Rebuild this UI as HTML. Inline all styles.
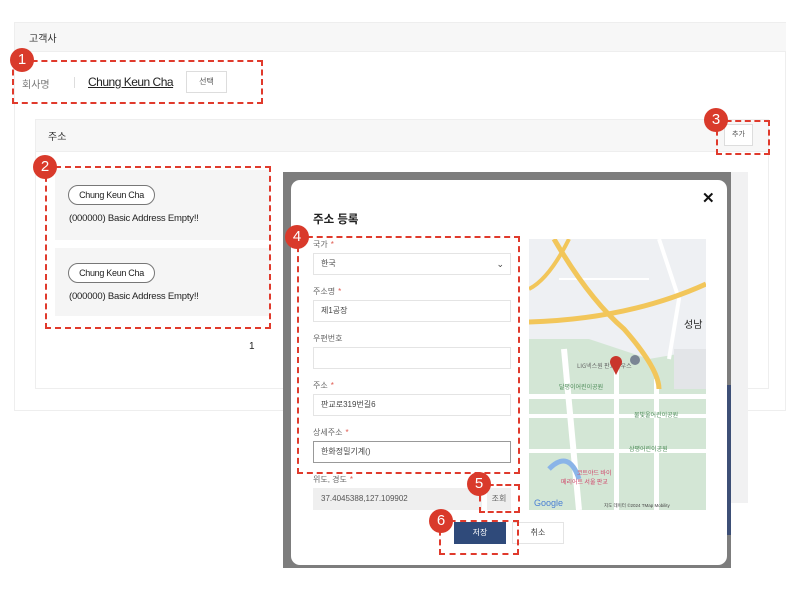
<!DOCTYPE html>
<html><head><meta charset="utf-8"><style>
*{box-sizing:border-box;margin:0;padding:0}
body{width:786px;height:597px;background:#fff;position:relative;overflow:hidden;font-family:"Liberation Sans","Noto Sans CJK KR",sans-serif;color:#333}
.a{position:absolute}
.dash{position:absolute;border:2px dashed #e03a2c}
.badge{position:absolute;width:24px;height:24px;border-radius:50%;background:#d93a2b;color:#fff;font-size:15px;text-align:center;line-height:24px;margin:-12px 0 0 -12px}
.lbl{position:absolute;font-size:8px;color:#666}
.lbl b{color:#e05a50;font-weight:normal;margin-left:3px}
.inp{position:absolute;left:313px;width:198px;height:22px;border:1px solid #e4e4e4;background:#fff;font-size:8px;color:#444;padding:0 7px;line-height:20px}
.card{position:absolute;left:55px;width:215px;background:#f5f5f5}
.chip{position:absolute;left:13px;top:15px;width:87px;height:20px;border:1px solid #777;border-radius:10px;background:#fff;font-size:9px;text-align:center;line-height:18px;color:#222;letter-spacing:-0.3px}
.addr{position:absolute;left:14px;top:43px;font-size:9.5px;color:#222;letter-spacing:-0.2px}
</style></head><body>
<div class="a" style="left:14px;top:22px;width:772px;height:389px;border:1px solid #eee;background:#fff"></div>
<div class="a" style="left:15px;top:23px;width:771px;height:29px;background:#f7f7f7;border-bottom:1px solid #eee"></div>
<div class="a" style="left:29px;top:30px;font-size:10px;color:#333">고객사</div>
<div class="a" style="left:22px;top:76px;font-size:10px;color:#777">회사명</div>
<div class="a" style="left:74px;top:77px;width:1px;height:11px;background:#ddd"></div>
<div class="a" style="left:88px;top:75px;font-size:12px;color:#222;text-decoration:underline;letter-spacing:-0.5px">Chung Keun Cha</div>
<div class="a" style="left:186px;top:71px;width:41px;height:22px;border:1px solid #ddd;font-size:8px;text-align:center;line-height:20px;color:#555;background:#fff">선택</div>
<div class="a" style="left:35px;top:119px;width:734px;height:270px;border:1px solid #eee;background:#fff"></div>
<div class="a" style="left:36px;top:120px;width:732px;height:32px;background:#f7f7f7;border-bottom:1px solid #eee"></div>
<div class="a" style="left:48px;top:128px;font-size:10px;color:#333">주소</div>
<div class="a" style="left:724px;top:124px;width:29px;height:22px;border:1px solid #ddd;background:#fff;font-size:7px;text-align:center;line-height:20px;color:#555">추가</div>
<div class="card" style="top:170px;height:70px"><div class="chip">Chung Keun Cha</div><div class="addr">(000000) Basic Address Empty!!</div></div>
<div class="card" style="top:248px;height:68px"><div class="chip">Chung Keun Cha</div><div class="addr">(000000) Basic Address Empty!!</div></div>
<div class="a" style="left:249px;top:341px;font-size:10px;color:#222">1</div>
<div class="a" style="left:467px;top:172px;width:281px;height:331px;background:#f1f1f2"></div>
<div class="a" style="left:283px;top:172px;width:448px;height:396px;background:#7d7d7d"></div>
<div class="a" style="left:727px;top:385px;width:4px;height:150px;background:#3d4f76"></div>
<div class="a" style="left:291px;top:180px;width:436px;height:385px;background:#fff;border-radius:9px"></div>
<div class="a" style="left:313px;top:211px;font-size:11.5px;font-weight:bold;color:#222">주소 등록</div>
<div class="a" style="left:702px;top:189px;font-size:15px;font-weight:bold;color:#111">✕</div>
<div class="lbl" style="left:313px;top:239px">국가<b>*</b></div>
<div class="inp" style="top:253px">한국<span style="position:absolute;right:6px;top:0;font-size:9px">⌄</span></div>
<div class="lbl" style="left:313px;top:286px">주소명<b>*</b></div>
<div class="inp" style="top:300px">제1공장</div>
<div class="lbl" style="left:313px;top:333px">우편번호</div>
<div class="inp" style="top:347px"></div>
<div class="lbl" style="left:313px;top:380px">주소<b>*</b></div>
<div class="inp" style="top:394px">판교로319번길6</div>
<div class="lbl" style="left:313px;top:427px">상세주소<b>*</b></div>
<div class="inp" style="top:441px;border-color:#999">한화정밀기계()</div>
<div class="lbl" style="left:313px;top:474px">위도, 경도<b>*</b></div>
<div class="inp" style="top:488px;width:169px;background:#efefef;border-color:#efefef;color:#555">37.4045388,127.109902</div>
<div class="a" style="left:487px;top:488px;width:24px;height:22px;background:#eee;font-size:8px;text-align:center;line-height:22px;color:#666">조회</div>
<div class="a" style="left:454px;top:522px;width:52px;height:22px;background:#2f4a7a;color:#fff;font-size:8px;text-align:center;line-height:22px">저장</div>
<div class="a" style="left:512px;top:522px;width:52px;height:22px;border:1px solid #e4e4e4;color:#444;font-size:8px;text-align:center;line-height:20px">취소</div>
<svg class="a" style="left:529px;top:239px" width="177" height="271" viewBox="0 0 177 271">
<rect width="177" height="271" fill="#eef0f3"/>
<path d="M0 100 L60 100 L120 120 L177 110 L177 271 L0 271Z" fill="#d3e6d5"/>
<path d="M130 0 L150 60 L140 120" stroke="#fff" stroke-width="4" fill="none"/>
<path d="M30 40 L120 40" stroke="#fff" stroke-width="2" fill="none"/>
<rect x="0" y="155" width="177" height="5" fill="#fff"/>
<rect x="0" y="175" width="177" height="4" fill="#fff"/>
<rect x="0" y="210" width="177" height="4" fill="#fff"/>
<rect x="85" y="130" width="5" height="141" fill="#fff"/>
<rect x="125" y="140" width="5" height="131" fill="#fff"/>
<path d="M35 110 L50 271" stroke="#fff" stroke-width="6" fill="none"/>
<path d="M0 83 Q100 80 177 45" stroke="#f2c65a" stroke-width="5" fill="none"/>
<path d="M25 0 Q60 60 95 90 Q130 130 130 150" stroke="#f2c65a" stroke-width="5" fill="none"/>
<path d="M40 0 Q20 40 0 50" stroke="#f2c65a" stroke-width="4" fill="none"/>
<rect x="145" y="110" width="32" height="40" fill="#e3e5e8"/>
<path d="M20 230 Q40 210 50 240" stroke="#8ab4e8" stroke-width="5" fill="none"/>
<text x="155" y="89" font-size="10" fill="#222" font-family="Liberation Sans,Noto Sans CJK KR,sans-serif">성남</text>
<text x="48" y="129" font-size="6" fill="#666" font-family="Noto Sans CJK KR,sans-serif">LIG넥스원 판교하우스</text>
<text x="30" y="150" font-size="6" fill="#4a8a55" font-family="Noto Sans CJK KR,sans-serif">달평이어린이공원</text>
<text x="105" y="178" font-size="6" fill="#4a8a55" font-family="Noto Sans CJK KR,sans-serif">물빛울어린이공원</text>
<text x="100" y="212" font-size="6" fill="#4a8a55" font-family="Noto Sans CJK KR,sans-serif">삼평어린이공원</text>
<text x="48" y="236" font-size="6" fill="#d0456a" font-family="Noto Sans CJK KR,sans-serif">코트야드 바이</text>
<text x="32" y="245" font-size="6" fill="#d0456a" font-family="Noto Sans CJK KR,sans-serif">메리어트 서울 판교</text>
<circle cx="87" cy="123" r="6" fill="#c9352b"/><path d="M82 126 L87 136 L92 126Z" fill="#c9352b"/>
<circle cx="106" cy="121" r="5" fill="#7a8594"/>
<text x="5" y="267" font-size="9" fill="#4a7fd4" font-family="Liberation Sans,sans-serif">Google</text>
<text x="75" y="268" font-size="4.5" fill="#444" font-family="Liberation Sans,sans-serif">지도 데이터 ©2024 TMap Mobility</text>
</svg>
<div class="dash" style="left:12px;top:60px;width:251px;height:44px"></div>
<div class="dash" style="left:716px;top:120px;width:54px;height:35px"></div>
<div class="dash" style="left:45px;top:166px;width:226px;height:163px"></div>
<div class="dash" style="left:297px;top:236px;width:223px;height:238px"></div>
<div class="dash" style="left:479px;top:484px;width:41px;height:29px"></div>
<div class="dash" style="left:439px;top:520px;width:80px;height:35px"></div>
<div class="badge" style="left:22px;top:60px">1</div>
<div class="badge" style="left:45px;top:167px">2</div>
<div class="badge" style="left:716px;top:120px">3</div>
<div class="badge" style="left:297px;top:237px">4</div>
<div class="badge" style="left:479px;top:484px">5</div>
<div class="badge" style="left:441px;top:521px">6</div>
</body></html>
